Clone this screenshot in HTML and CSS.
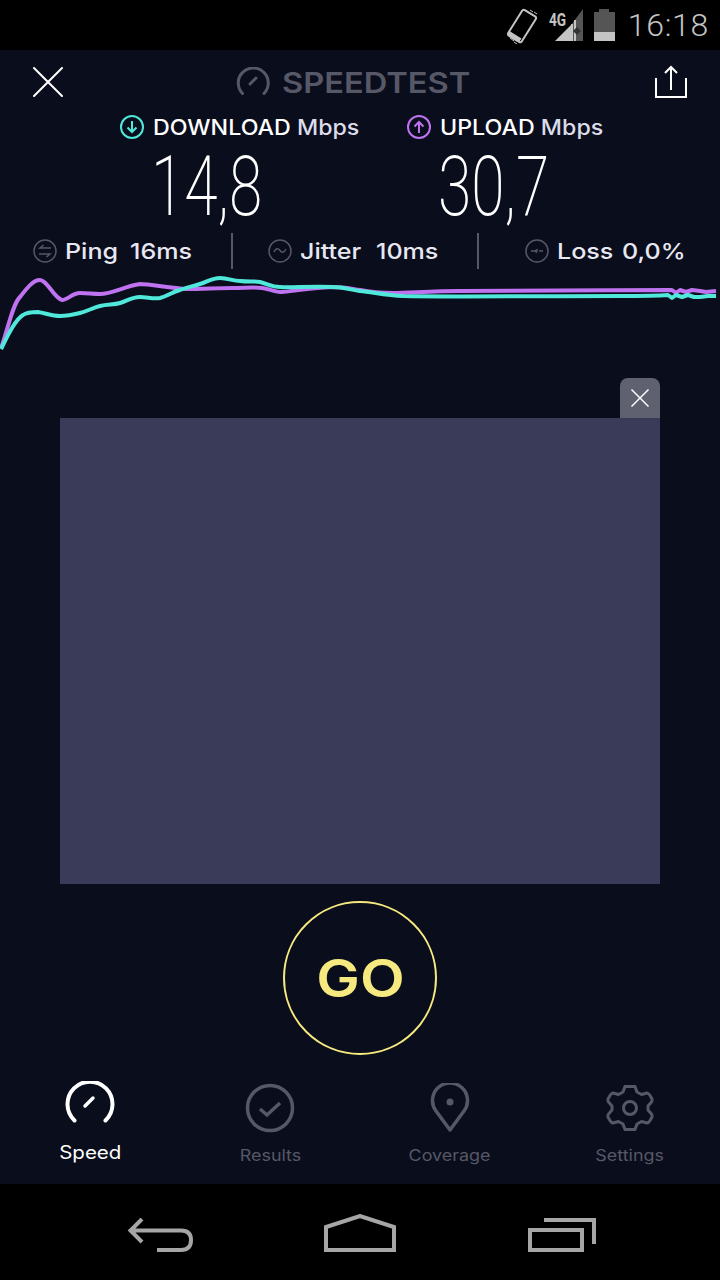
FILE: index.html
```html
<!DOCTYPE html>
<html lang="en">
<head>
<meta charset="utf-8">
<title>Speedtest</title>
<link rel="stylesheet" href="styles.css">
</head>
<body>
<div class="phone">
  <div class="statusbar">
    <svg class="st-vib" width="32" height="36" viewBox="0 0 32 36"><g transform="rotate(32 16 18)" fill="none" stroke="#c4c4c4" stroke-width="2"><rect x="8" y="3" width="16" height="30" rx="2"/></g><path d="M4 30l4 3M8 34l3 2M24 2l3 2M28 4l3 2" stroke="#c4c4c4" stroke-width="1"/><path d="M3.500 23l12 7.500-2 3q-1 1-2.500.3l-8-5q-1.500-1-1-2.300z" fill="#c4c4c4"/></svg>
    <div class="st-sig">
      <span class="st-4g">4G</span>
      <svg width="28" height="32" viewBox="0 0 28 32"><path d="M0 32L16 16V32z" fill="#c4c4c4"/><path d="M16 16L28 0V32H16z" fill="#555"/><path d="M17 32V15M20 32V11" stroke="#c4c4c4" stroke-width="2"/><path d="M18 22l4-4 4 4-4 4z" fill="#333"/></svg>
    </div>
    <div class="st-bat"><div class="st-bat-cap"></div><div class="st-bat-body"><div class="st-bat-fill"></div></div></div>
    <span class="st-time">16:18</span>
  </div>

  <main class="app">
    <header class="topbar">
      <svg width="30" height="30" viewBox="0 0 30 30"><path d="M1 1l28 28M29 1L1 29" stroke="#fff" stroke-width="2" fill="none" stroke-linecap="round"/></svg>
      <div class="brand">
        <svg width="34" height="30" viewBox="0 0 34 30"><path d="M6.500 26.500A15 15 0 1 1 28 26.500" fill="none" stroke="#575867" stroke-width="3" stroke-linecap="round"/><path d="M14 17l6-6" stroke="#575867" stroke-width="3" stroke-linecap="round"/></svg>
        <span>SPEEDTEST</span>
      </div>
      <svg width="34" height="34" viewBox="0 0 34 34"><path d="M2 13v19h30V13M17 25V3M11 8l6-6 6 6" fill="none" stroke="#fff" stroke-width="2"/></svg>
    </header>

    <section class="speeds">
      <div class="speed">
        <div class="speed-label">
          <svg width="24" height="24" viewBox="0 0 24 24"><circle cx="12" cy="12" r="11" fill="none" stroke="#4fe8da" stroke-width="2"/><path d="M12 6v11M7.500 12.500L12 17l4.500-4.500" fill="none" stroke="#4fe8da" stroke-width="2"/></svg>
          <span>DOWNLOAD <em>Mbps</em></span>
        </div>
        <div class="speed-value">14,8</div>
      </div>
      <div class="speed">
        <div class="speed-label">
          <svg width="24" height="24" viewBox="0 0 24 24"><circle cx="12" cy="12" r="11" fill="none" stroke="#bf73f0" stroke-width="2"/><path d="M12 18V7M7.500 11.500L12 7l4.500 4.500" fill="none" stroke="#bf73f0" stroke-width="2"/></svg>
          <span>UPLOAD <em>Mbps</em></span>
        </div>
        <div class="speed-value">30,7</div>
      </div>
    </section>

    <section class="metrics">
      <div class="metric metric-ping">
        <svg width="24" height="24" viewBox="0 0 24 24"><circle cx="12" cy="12" r="11" fill="none" stroke="#575867" stroke-width="1.500"/><path d="M18 9H7l3.500-3M6 15h11l-3.500 3" fill="none" stroke="#575867" stroke-width="1.500"/></svg>
        <span class="metric-name">Ping</span><span class="metric-val">16ms</span>
      </div>
      <div class="metric-sep"></div>
      <div class="metric metric-jitter">
        <svg width="24" height="24" viewBox="0 0 24 24"><circle cx="12" cy="12" r="11" fill="none" stroke="#575867" stroke-width="1.500"/><path d="M6 13c2-4 4-4 6-1.500s4 2.500 6-1.500" fill="none" stroke="#575867" stroke-width="1.500"/></svg>
        <span class="metric-name">Jitter</span><span class="metric-val">10ms</span>
      </div>
      <div class="metric-sep"></div>
      <div class="metric metric-loss">
        <svg width="24" height="24" viewBox="0 0 24 24"><circle cx="12" cy="12" r="11" fill="none" stroke="#575867" stroke-width="1.500"/><path d="M6 12h4l2-1-1 3M14 12h4" fill="none" stroke="#575867" stroke-width="1.500"/></svg>
        <span class="metric-name">Loss</span><span class="metric-val">0,0%</span>
      </div>
    </section>

    <svg class="chart" width="720" height="90" viewBox="0 270 720 90">
      <path class="line-up" d="M1 348C8 330 12 305 20 297C27 288 33 280 40 280C47 280 54 298 62 300C68 300 72 293 80 293C87 293 93 294 100 294C112 294 125 286 140 284C150 284 170 288 187 289C200 289 220 288 233 288C245 288 255 287 262 288C270 289 275 292 282 292C290 292 305 288 333 287C345 287 352 289 360 290C370 292 385 293 393 293C410 293 430 291 460 291C520 291 600 290 672 290L676 293L680 290L686 292L692 290L700 291L706 292L716 291"/>
      <path class="line-down" d="M1 349C8 335 15 320 23 315C27 312 32 312 38 312C45 313 52 316 60 316C68 316 72 315 80 313C88 311 92 308 100 306C108 304 114 305 120 303C127 301 132 297 140 297C147 297 153 299 160 298C168 296 172 292 180 290C188 287 194 286 200 284C207 282 212 278 220 278C228 278 233 281 240 281C248 282 254 281 260 282C268 284 272 287 280 287C290 288 310 286 333 287C342 287 352 290 360 291C372 292 385 295 403 296C440 297 540 296 620 296C640 296 655 296 668 295L672 298L676 295L682 297L688 295L694 297L700 297L708 296L716 296"/>
    </svg>

    <section class="ad">
      <button class="ad-close" aria-label="Close"><svg width="20" height="20" viewBox="0 0 20 20"><path d="M1.500 1.500l17 17M18.500 1.500l-17 17" stroke="#fff" stroke-width="1.500" fill="none"/></svg></button>
      <div class="ad-box"></div>
    </section>

    <div class="go-wrap"><div class="go"><span>GO</span></div></div>

    <nav class="tabs">
      <div class="tab tab-active">
        <svg width="50" height="44" viewBox="0 0 50 44"><path d="M9.500 39.500A22.500 22.500 0 1 1 40.500 39.500" fill="none" stroke="#fff" stroke-width="4" stroke-linecap="round"/><path d="M20 25l8-8" stroke="#fff" stroke-width="3.500" stroke-linecap="round"/></svg>
        <span>Speed</span>
      </div>
      <div class="tab">
        <svg width="50" height="50" viewBox="0 0 50 50"><circle cx="25" cy="25" r="22.500" fill="none" stroke="#575867" stroke-width="3.500"/><path d="M15 26l7 6 13-12" fill="none" stroke="#575867" stroke-width="3.500"/></svg>
        <span>Results</span>
      </div>
      <div class="tab">
        <svg width="50" height="50" viewBox="0 0 50 50"><path d="M25 47L11 28A17.500 17.500 0 1 1 39 28z" fill="none" stroke="#575867" stroke-width="3.500" stroke-linejoin="round"/><circle cx="25" cy="19" r="3.500" fill="#575867"/></svg>
        <span>Coverage</span>
      </div>
      <div class="tab">
        <svg width="50" height="50" viewBox="0 0 50 50"><path d="M20 3.500h10l2 5.500 4.500 2.500 5.500-1.500q2 0 5 6 .5 2-.5 3L43 23v4l3.500 4q1 1 .5 3-3 6-5 6l-5.500-1.500L32 41l-2 5.500H20L18 41l-4.500-2.500L8 40q-2 0-5-6-.5-2 .5-3L7 27v-4l-3.500-4q-1-1-.5-3 3-6 5-6l5.500 1.500L18 9z" fill="none" stroke="#575867" stroke-width="3" stroke-linejoin="round"/><circle cx="25" cy="25" r="6.500" fill="none" stroke="#575867" stroke-width="3"/></svg>
        <span>Settings</span>
      </div>
    </nav>
  </main>

  <footer class="navbar">
    <svg width="66" height="34" viewBox="0 0 66 34"><path d="M15 1L3.500 12.500 15 24M4 12.500h50q10 0 10 9.500 0 10-10 10H30" fill="none" stroke="#a6a6a6" stroke-width="4"/></svg>
    <svg width="72" height="38" viewBox="0 0 72 38"><path d="M2 36V13L36 2l34 11v23z" fill="none" stroke="#a6a6a6" stroke-width="4"/></svg>
    <svg class="nav-recent" width="68" height="34" viewBox="0 0 68 34"><path d="M2 12h52v20H2z" fill="none" stroke="#a6a6a6" stroke-width="4"/><path d="M16 2h50v24" fill="none" stroke="#a6a6a6" stroke-width="4"/></svg>
  </footer>
</div>
</body>
</html>
```

FILE: styles.css
```css
* { box-sizing: border-box; }
html, body { margin: 0; padding: 0; background: #000; }
.phone {
  width: 720px;
  height: 1280px;
  display: flex;
  flex-direction: column;
  font-family: "Inter", "Liberation Sans", sans-serif;
  overflow: hidden;
}

/* Status bar */
.statusbar {
  height: 50px;
  flex: none;
  background: #000;
  display: flex;
  align-items: center;
  justify-content: flex-end;
  padding-right: 11px;
}
.st-vib { margin-right: 11px; margin-top: 2px; }
.st-sig { position: relative; width: 34px; height: 32px; margin-right: 11px; }
.st-sig svg { position: absolute; right: 0; top: 0; }
.st-4g {
  position: absolute; left: 0; top: 2px; z-index: 1;
  font: 700 19px/18px "Roboto", sans-serif; color: #c4c4c4;
  transform: scaleX(.72); transform-origin: left top;
}
.st-bat { width: 21px; height: 32px; margin-right: 13px; display: flex; flex-direction: column; align-items: center; }
.st-bat-cap { width: 10px; height: 3px; background: #555; }
.st-bat-body { width: 21px; flex: 1; background: #555; display: flex; align-items: flex-end; }
.st-bat-fill { width: 100%; height: 9px; background: #c4c4c4; }
.st-time { font: 300 32px/50px "Roboto", sans-serif; color: #c4c4c4; letter-spacing: .7px; }

/* App */
.app { flex: 1; background: #0a0d1c; display: flex; flex-direction: column; }
.topbar {
  height: 62px;
  flex: none;
  display: flex;
  align-items: center;
  justify-content: space-between;
  padding: 2px 32px 0 33px;
}
.brand { display: flex; align-items: center; gap: 12px; margin-right: 14px; width: 232px; }
.brand span { font-size: 29px; font-weight: 600; color: #575867; line-height: 34px; margin-top: 2px; transform: scaleX(1.125); transform-origin: left center; }

.speeds { display: flex; height: 110px; flex: none; padding-left: 120px; }
.speed { width: 287px; }
.speed-label { display: flex; align-items: center; gap: 9px; height: 30px; color: #fff; font-size: 21px; font-weight: 500; white-space: nowrap; }
.speed-label span { transform: scaleX(1.105); transform-origin: left center; }
.speed-label em { font-style: normal; color: #dcdcea; }
.speed-value {
  font: 200 84px/80px "Roboto", sans-serif;
  color: #fff;
  margin: 5px 0 0 31px;
  transform: scaleX(.72);
  transform-origin: left center;
  white-space: nowrap;
}

.metrics { display: flex; align-items: center; height: 44px; flex: none; margin-top: 7px; color: #e8e8f2; font-size: 22px; font-weight: 500; }
.metric { display: flex; align-items: center; white-space: nowrap; }
.metric svg { margin-right: 8px; flex: none; }
.metric span { transform: scaleX(1.14); transform-origin: left center; }
.metric-name { width: 65px; flex: none; }
.metric-ping { width: 231px; padding-left: 33px; }
.metric-sep { width: 2px; height: 36px; background: #575867; flex: none; }
.metric-jitter { width: 244px; padding-left: 35px; }
.metric-jitter .metric-name { width: 76px; }
.metric-loss { padding-left: 46px; }

.chart { display: block; flex: none; margin-top: -3px; }
.chart path { fill: none; stroke-width: 4px; stroke-linejoin: round; }
.line-up { stroke: #bf73f0; }
.line-down { stroke: #4fe8da; }

.ad { flex: none; height: 506px; margin-top: 18px; padding: 0 60px; display: flex; flex-direction: column; align-items: flex-end; }
.ad-close { width: 40px; height: 40px; flex: none; border: 0; padding: 0; background: #5f6070; border-radius: 8px 8px 0 0; display: flex; align-items: center; justify-content: center; }
.ad-box { width: 600px; height: 466px; flex: none; background: #3a3b59; }

.go-wrap { display: flex; justify-content: center; margin-top: 17px; flex: none; }
.go {
  width: 154px; height: 154px; border-radius: 50%;
  border: 2px solid #f5e97f;
  color: #f5e97f;
  display: flex; align-items: center; justify-content: center;
  font-size: 52px; font-weight: 600;
}
.go span { transform: scaleX(1.12); }

.tabs { display: grid; grid-template-columns: repeat(4, 180px); margin-top: 28px; flex: none; }
.tab { display: flex; flex-direction: column; align-items: center; height: 84px; color: #575867; font-size: 16px; font-weight: 400; }
.tab svg { flex: none; }
.tab span { margin-top: 12px; line-height: 20px; transform: scaleX(1.12); }
.tab-active { color: #fff; font-size: 18px; }
.tab-active svg { margin-top: -2px; }
.tab-active span { margin-top: 18px; transform: scaleX(1.14); }

.navbar {
  height: 96px;
  flex: none;
  background: #000;
  display: grid;
  grid-template-columns: repeat(3, 200px);
  justify-items: center;
  align-items: end;
  padding: 0 60px 28px;
}
.nav-recent { margin-left: 4px; }
```
